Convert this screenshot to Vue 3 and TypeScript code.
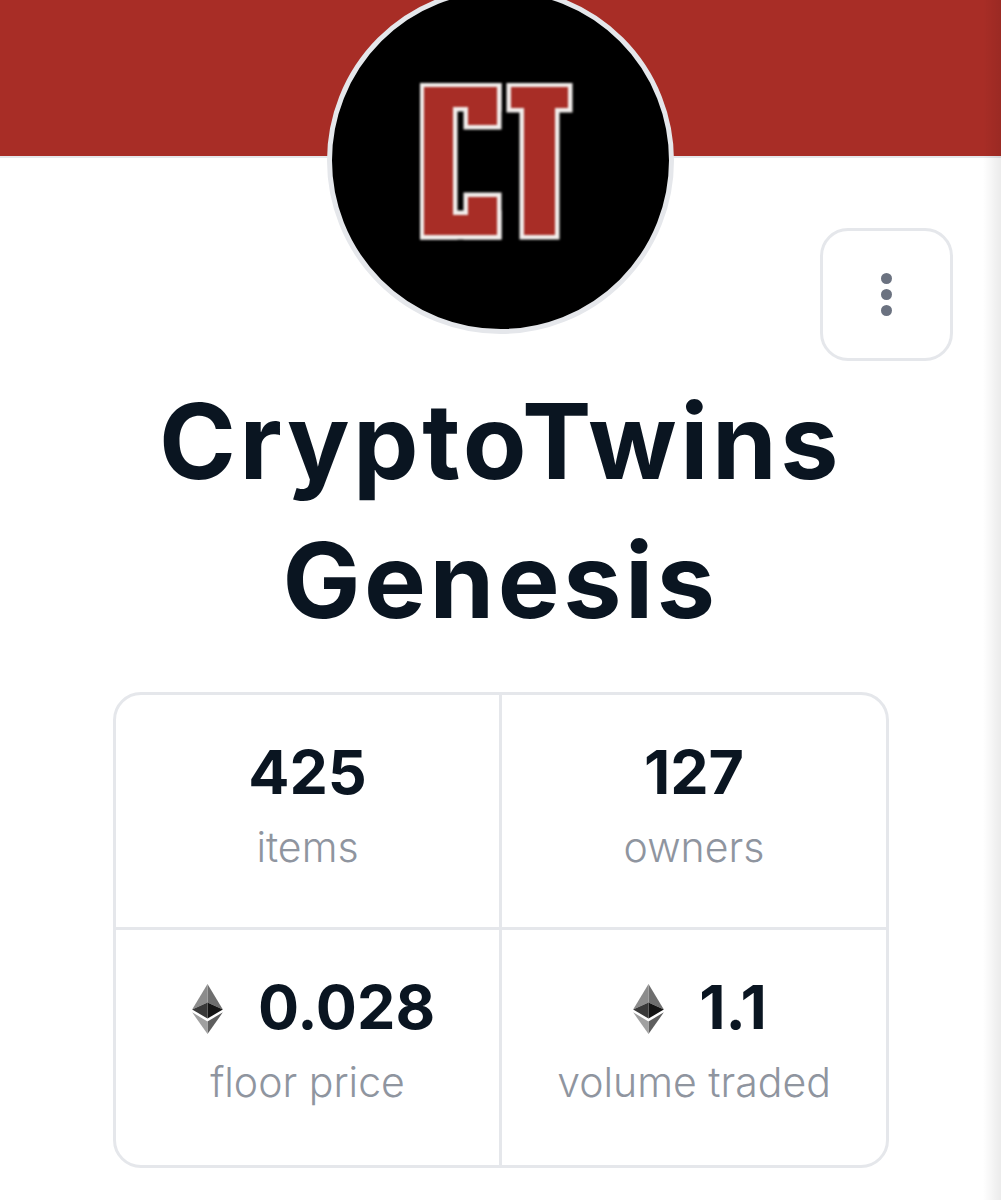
<script setup lang="ts">
interface Stat { value: string; label: string; eth?: boolean }
const stats: Stat[] = [
  { value: '425', label: 'items' },
  { value: '127', label: 'owners' },
  { value: '0.028', label: 'floor price', eth: true },
  { value: '1.1', label: 'volume traded', eth: true },
]
</script>

<template>
  <main class="page">
    <div class="banner"></div>
    <div class="avatar">
      <svg class="logo" viewBox="0 0 160 160" role="img" aria-label="CT logo">
        <g class="outline">
          <rect x="4" y="4" width="29" height="148" />
          <rect x="4" y="4" width="73" height="20" />
          <rect x="48" y="4" width="29" height="38" />
          <rect x="4" y="132" width="73" height="20" />
          <rect x="48" y="114" width="29" height="38" />
          <rect x="91" y="4" width="57" height="21" />
          <rect x="104" y="4" width="31" height="148" />
        </g>
        <g class="fill">
          <rect x="4" y="4" width="29" height="148" />
          <rect x="4" y="4" width="73" height="20" />
          <rect x="48" y="4" width="29" height="38" />
          <rect x="4" y="132" width="73" height="20" />
          <rect x="48" y="114" width="29" height="38" />
          <rect x="91" y="4" width="57" height="21" />
          <rect x="104" y="4" width="31" height="148" />
        </g>
      </svg>
    </div>
    <div class="actions">
      <button class="more" type="button" aria-label="More">
        <span class="dot"></span><span class="dot"></span><span class="dot"></span>
      </button>
    </div>
    <h1 class="title">CryptoTwins<br />Genesis</h1>
    <section class="stats">
      <div v-for="s in stats" :key="s.label" class="cell">
        <div class="value" :class="{ priced: s.eth }">
          <svg v-if="s.eth" class="eth" viewBox="0 0 256 417" aria-hidden="true">
            <polygon fill="#6e6e6e" points="127.96,0 255.92,212.32 127.96,154.16" />
            <polygon fill="#8C8C8C" points="127.96,0 0,212.32 127.96,154.16" />
            <polygon fill="#5e5e5e" points="127.96,312.19 127.96,416.9 256,236.59" />
            <polygon fill="#a0a0a0" points="127.96,416.9 127.96,312.19 0,236.59" />
            <polygon fill="#141414" points="127.96,287.96 255.92,212.32 127.96,154.16" />
            <polygon fill="#393939" points="0,212.32 127.96,287.96 127.96,154.16" />
          </svg>
          <span>{{ s.value }}</span>
        </div>
        <div class="label">{{ s.label }}</div>
      </div>
    </section>
    <div class="edge"></div>
  </main>
</template>

<style>
body { background: #fff; }
</style>

<style scoped>
.page {
  position: relative;
  width: 1001px;
  height: 1200px;
  overflow: hidden;
  background: #fff;
  font-family: Inter, "Liberation Sans", sans-serif;
}
.banner {
  height: 156px;
  background: #a82d26;
  border-bottom: 2px solid #e5e7eb;
}
.avatar {
  position: absolute;
  left: 327px;
  top: -13px;
  width: 347px;
  height: 347px;
  box-sizing: border-box;
  border: 5px solid #e5e7eb;
  border-radius: 50%;
  background: #000;
  overflow: hidden;
}
.logo {
  position: absolute;
  left: 88px;
  top: 91px;
  width: 160px;
  height: 160px;
  filter: blur(0.8px);
}
.outline rect {
  fill: #f2eeec;
  stroke: #f2eeec;
  stroke-width: 9;
}
.fill rect { fill: #a82d26; }
.actions {
  display: flex;
  justify-content: flex-end;
  padding: 70px 48px 0 0;
}
.more {
  width: 133px;
  height: 133px;
  box-sizing: border-box;
  border: 3px solid #e5e7eb;
  border-radius: 28px;
  background: #fff;
  padding: 0;
  display: flex;
  flex-direction: column;
  align-items: center;
  justify-content: center;
  gap: 5px;
}
.dot {
  width: 11px;
  height: 11px;
  border-radius: 50%;
  background: #6b7280;
}
.title {
  margin: 11px 0 0;
  text-align: center;
  font-size: 104px;
  font-weight: 700;
  line-height: 139px;
  color: #0a1521;
  letter-spacing: 3.5px;
}
.stats {
  display: grid;
  grid-template-columns: 386px 384px;
  grid-template-rows: 235px 235px;
  width: 776px;
  box-sizing: border-box;
  margin: 42px 0 0 113px;
  border: 3px solid #e5e7eb;
  border-radius: 28px;
}
.cell {
  display: flex;
  flex-direction: column;
  align-items: center;
  padding-top: 42px;
  box-sizing: border-box;
}
.cell:nth-child(odd) { border-right: 3px solid #e5e7eb; }
.cell:nth-child(-n + 2) { border-bottom: 3px solid #e5e7eb; }
.value {
  display: flex;
  align-items: center;
  gap: 34px;
  height: 70px;
  font-size: 61px;
  font-weight: 700;
  line-height: 70px;
  color: #0a1521;
}
.priced { padding-left: 11px; }
.eth {
  width: 33px;
  height: 50px;
  margin-top: 3px;
}
.label {
  margin-top: 18px;
  font-size: 41px;
  font-weight: 300;
  line-height: 44px;
  color: #8f959f;
}
.edge {
  position: absolute;
  top: 0;
  right: 0;
  bottom: 0;
  width: 18px;
  background: linear-gradient(to right, rgba(0, 0, 0, 0), rgba(0, 0, 0, 0.08));
}
</style>
